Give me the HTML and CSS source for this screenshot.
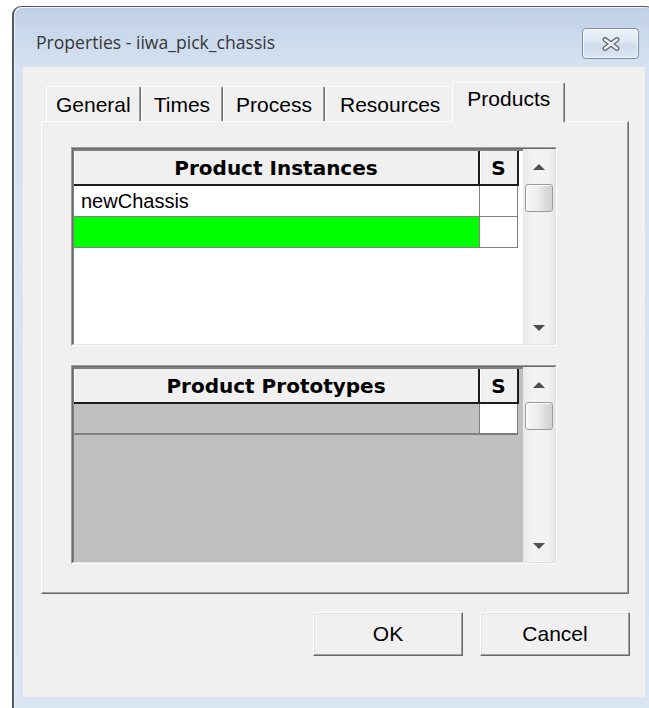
FILE: index.html
```html
<!DOCTYPE html>
<html lang="en">
<head>
<meta charset="utf-8">
<title>Properties - iiwa_pick_chassis</title>
<link rel="stylesheet" href="styles.css">
</head>
<body>
<div class="window">
  <div class="titlebar">
    <span class="title">Properties - iiwa_pick_chassis</span>
    <button class="close" aria-label="Close">
      <svg width="20" height="14" viewBox="0 0 20 14">
        <path d="M4 2.5 L16 11.5 M16 2.5 L4 11.5" stroke="#5f6670" stroke-width="5" stroke-linecap="round" fill="none"/>
        <path d="M4 2.5 L16 11.5 M16 2.5 L4 11.5" stroke="#eef0f3" stroke-width="2.4" stroke-linecap="round" fill="none"/>
      </svg>
    </button>
  </div>

  <div class="client">
    <div class="tabs">
      <div class="tab">General</div>
      <div class="tab">Times</div>
      <div class="tab">Process</div>
      <div class="tab">Resources</div>
      <div class="tab active">Products</div>
    </div>

    <div class="panel">
      <div class="listbox">
        <div class="listbox-inner">
          <div class="grid">
            <div class="row head">
              <div class="cell name">Product Instances</div>
              <div class="cell flag">S</div>
            </div>
            <div class="row">
              <div class="cell name">newChassis</div>
              <div class="cell flag"></div>
            </div>
            <div class="row">
              <div class="cell name new-row"></div>
              <div class="cell flag"></div>
            </div>
          </div>
          <div class="vscroll">
            <div class="sb-btn"><span class="arrow up"></span></div>
            <div class="thumb"></div>
            <div class="track"></div>
            <div class="sb-btn down"><span class="arrow dn"></span></div>
          </div>
        </div>
      </div>

      <div class="listbox">
        <div class="listbox-inner">
          <div class="grid disabled">
            <div class="row head">
              <div class="cell name">Product Prototypes</div>
              <div class="cell flag">S</div>
            </div>
            <div class="row">
              <div class="cell name"></div>
              <div class="cell flag"></div>
            </div>
          </div>
          <div class="vscroll">
            <div class="sb-btn"><span class="arrow up"></span></div>
            <div class="thumb"></div>
            <div class="track"></div>
            <div class="sb-btn down"><span class="arrow dn"></span></div>
          </div>
        </div>
      </div>
    </div>

    <div class="buttons">
      <button class="btn">OK</button>
      <button class="btn">Cancel</button>
    </div>
  </div>
</div>
</body>
</html>
```

FILE: styles.css
```css
* { box-sizing: border-box; }

html, body {
  margin: 0;
  padding: 0;
}

body {
  width: 649px;
  height: 708px;
  overflow: hidden;
  background: #ffffff;
  font-family: "Liberation Sans", Arial, sans-serif;
  color: #000;
}

/* dialog frame */
.window {
  margin: 6px 0 0 12px;
  width: 643px;
  height: 720px;
  border: 1px solid #55585e;
  border-left-width: 2px;
  border-radius: 9px 9px 0 0;
  background: linear-gradient(#bfd0e6 0, #cbd9ec 30px, #d6e2f1 60px, #d9e5f3 100%);
  box-shadow: inset 1px 1px 0 #edf2f9;
}

.titlebar {
  height: 60px;
  display: flex;
  justify-content: space-between;
  align-items: flex-start;
  padding: 0 15px 0 22px;
}

.title {
  margin-top: 24px;
  font-family: "Open Sans", "Noto Sans", sans-serif;
  font-size: 17.6px;
  line-height: 22px;
  color: #373737;
}

.close {
  margin-top: 21px;
  width: 57px;
  height: 31px;
  padding: 0;
  display: flex;
  align-items: center;
  justify-content: center;
  border: 1px solid #7b8ca6;
  border-radius: 4px;
  background: linear-gradient(#edf2f9 0, #dde6f2 48%, #cfdcec 52%, #dbe5f2 100%);
  box-shadow: inset 0 0 0 1px rgba(255, 255, 255, 0.75);
}

.client {
  margin-left: 9px;
  width: 622px;
  height: 630px;
  background: #f0f0f0;
}

/* tab strip */
.tabs {
  position: relative;
  z-index: 1;
  height: 54px;
  display: flex;
  align-items: flex-end;
  padding-left: 23px;
}

.tab {
  height: 35px;
  padding: 2px 12px 0;
  font-size: 21px;
  line-height: 31px;
  white-space: nowrap;
  background: #f0f0f0;
  border-top: 1px solid #ffffff;
  border-left: 1px solid #ffffff;
  border-right: 1px solid #696969;
  border-radius: 2px 2px 0 0;
  box-shadow: inset -1px 0 0 #a0a0a0;
}

.tab:first-child {
  padding: 2px 9px 0 9px;
}

.tab:nth-child(4) {
  padding: 2px 13px 0 14px;
}

.tab.active {
  height: 40px;
  padding: 0 14px;
  margin: 0 -2px -1px -2px;
  position: relative;
}

/* property page */
.panel {
  margin-left: 18px;
  width: 588px;
  height: 473px;
  padding: 25px 0 0 29px;
  border-top: 1px solid #ffffff;
  border-left: 1px solid #ffffff;
  border-right: 1px solid #696969;
  border-bottom: 1px solid #696969;
  box-shadow: inset -1px -1px 0 #a0a0a0;
  display: flex;
  flex-direction: column;
  gap: 19px;
}

/* sunken list frame */
.listbox {
  width: 486px;
  height: 199px;
  border-top: 1px solid #a0a0a0;
  border-left: 1px solid #a0a0a0;
  border-right: 1px solid #ffffff;
  border-bottom: 1px solid #ffffff;
}

.listbox-inner {
  height: 100%;
  display: flex;
  border-top: 1px solid #696969;
  border-left: 1px solid #696969;
  border-right: 1px solid #e3e3e3;
  border-bottom: 1px solid #e3e3e3;
}

.grid {
  width: 450px;
  background: #ffffff;
  border-top: 2px solid #808080;
  border-left: 1px solid #808080;
}

.grid.disabled {
  background: #c0c0c0;
}

.row {
  display: flex;
  height: 31px;
}

.cell {
  height: 100%;
  border-right: 1px solid #808080;
  border-bottom: 1px solid #808080;
  font-size: 20px;
  line-height: 30px;
  white-space: nowrap;
}

.cell.name {
  width: 406px;
  padding-left: 7px;
}

.cell.flag {
  width: 38px;
  background: #ffffff;
}

.new-row {
  background: #00ff00;
}

.disabled .cell.name {
  background: #c0c0c0;
  border-bottom-width: 2px;
}

.disabled .row:not(.head) .cell.flag {
  border-bottom-width: 2px;
}

.row.head {
  height: 35px;
}

.row.head .cell {
  background: #f0f0f0;
  border-right: 2px solid #1c1c1c;
  border-bottom: 2px solid #1c1c1c;
  box-shadow: inset 1px 0 0 #ffffff;
  font-family: "DejaVu Sans", sans-serif;
  font-weight: bold;
  font-size: 20px;
  line-height: 34px;
  text-align: center;
  padding: 0;
}

.row.head .cell.flag {
  width: 39px;
}

/* vertical scroll bar */
.vscroll {
  width: 32px;
  display: flex;
  flex-direction: column;
  background: linear-gradient(to right, #e9e9e9, #f3f3f3 30%, #f1f1f1 80%, #e6e6e6);
}

.sb-btn {
  height: 35px;
  display: flex;
  align-items: center;
  justify-content: center;
}

.sb-btn.down {
  height: 32px;
}

.arrow {
  width: 0;
  height: 0;
  border-left: 6px solid transparent;
  border-right: 6px solid transparent;
}

.arrow.up {
  border-bottom: 6px solid #505050;
}

.arrow.dn {
  border-top: 6px solid #505050;
}

.thumb {
  height: 28px;
  margin: 0 2px;
  border: 1px solid #9a9a9a;
  border-radius: 3px;
  background: linear-gradient(to right, #f6f6f6, #ececec 45%, #dcdcdc 75%, #d2d2d2);
  box-shadow: inset 1px 1px 0 #ffffff;
}

.track {
  flex: 1;
}

/* dialog buttons */
.buttons {
  margin-top: 18px;
  display: flex;
  justify-content: flex-end;
  gap: 17px;
  padding-right: 15px;
}

.btn {
  width: 150px;
  height: 44px;
  padding: 0;
  font-family: "Liberation Sans", Arial, sans-serif;
  font-size: 21px;
  color: #000;
  background: #f0f0f0;
  border-top: 1px solid #ffffff;
  border-left: 1px solid #ffffff;
  border-right: 1px solid #696969;
  border-bottom: 1px solid #696969;
  box-shadow: inset -1px -1px 0 #a0a0a0, inset 1px 1px 0 #e3e3e3;
}
```
